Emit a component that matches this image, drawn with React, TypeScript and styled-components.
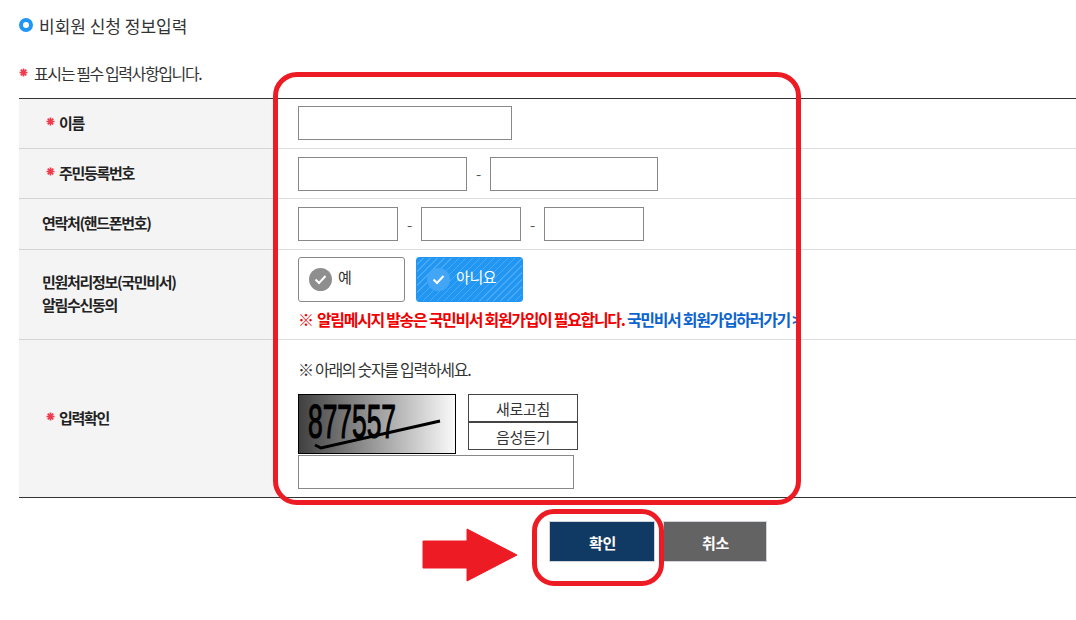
import React from "react";
import styled, { createGlobalStyle } from "styled-components";

const Global = createGlobalStyle`
  html, body { margin: 0; padding: 0; background: #fff; }
  body { font-family: "Noto Sans CJK KR", "Noto Sans", sans-serif; color: #333; width: 1076px; height: 620px; overflow: hidden; }
  * { box-sizing: border-box; }
`;

const Page = styled.div`
  position: relative;
  width: 1076px;
  height: 620px;
  padding: 13px 0 0 19px;
  overflow: hidden;
`;
const Heading = styled.h2`
  display: flex;
  align-items: center;
  gap: 6px;
  height: 24px;
  margin: 0;
  font-size: 17px;
  font-weight: 400;
  letter-spacing: 0;
  color: #333;
`;
const Bullet = styled.span`
  width: 14px;
  height: 14px;
  border-radius: 50%;
  border: 4px solid #2196f3;
  background: #fff;
`;
const Note = styled.p`
  display: flex;
  align-items: center;
  gap: 6px;
  height: 20px;
  margin: 26px 0 15px;
  font-size: 16px;
  letter-spacing: -1.4px;
  color: #333;
`;
const StarIcon = styled.svg`
  flex: none;
  width: 9px;
  height: 9px;
  transform: translateY(-1px);
`;
const Table = styled.div`
  border-top: 1px solid #333;
  border-bottom: 1px solid #333;
  display: grid;
  grid-template-columns: 259px 1fr;
  width: 1057px;
`;
const Row = styled.div<{ $h: number; $last?: boolean }>`
  display: contents;
  & > * {
    height: ${(p) => p.$h}px;
    border-bottom: ${(p) => (p.$last ? "none" : "1px solid #ddd")};
  }
`;
const Label = styled.div<{ $req?: boolean }>`
  background: #f4f4f4;
  border-bottom-color: #d4d4d4 !important;
  display: flex;
  align-items: center;
  gap: 4px;
  padding: 0 0 3px ${(p) => (p.$req ? 27 : 23)}px;
  font-size: 15px;
  font-weight: 700;
  letter-spacing: -1.3px;
  line-height: 23px;
  color: #222;
`;
const Cell = styled.div<{ $nudge?: number; $top?: number }>`
  display: flex;
  flex-direction: column;
  justify-content: center;
  padding: ${(p) => p.$top ?? 0}px 0 ${(p) => p.$nudge ?? 0}px 20px;
  overflow: hidden;
`;
const Inline = styled.div`
  display: flex;
  align-items: center;
`;
const Field = styled.input<{ $w: number }>`
  width: ${(p) => p.$w}px;
  height: 34px;
  border: 1px solid #888;
  background: #fff;
  padding: 0;
  outline: none;
`;
const Dash = styled.span<{ $w: number }>`
  width: ${(p) => p.$w}px;
  text-align: center;
  font-size: 15px;
  color: #555;
`;
const Choices = styled.div`
  display: flex;
  gap: 11px;
  margin-top: -6px;
`;
const Choice = styled.div<{ $on?: boolean }>`
  width: 107px;
  height: 45px;
  display: flex;
  align-items: center;
  gap: 6px;
  padding: 0 0 5px 10px;
  border-radius: 3px;
  font-size: 15px;
  letter-spacing: -0.4px;
  border: 1px solid ${(p) => (p.$on ? "#2196f3" : "#888")};
  color: ${(p) => (p.$on ? "#fff" : "#333")};
  background: ${(p) =>
    p.$on
      ? "repeating-linear-gradient(135deg, #2196f3 0 4px, #4aa9f5 4px 5px)"
      : "#fff"};
`;
const CheckDot = styled.span<{ $on?: boolean }>`
  width: 23px;
  height: 23px;
  margin-top: 5px;
  border-radius: 50%;
  display: flex;
  align-items: center;
  justify-content: center;
  background: ${(p) => (p.$on ? "#42a5f5" : "#8e8e8e")};
`;
const Alert = styled.div`
  width: 502px;
  height: 20px;
  margin-top: 7px;
  white-space: nowrap;
  overflow: hidden;
  font-size: 16px;
  font-weight: 700;
  line-height: 20px;
  letter-spacing: -1.33px;
  color: #f00000;
`;
const RefMark = styled.span`
  margin-right: 2px;
`;
const Blue = styled.span`
  color: #0b63ce;
`;
const Hint = styled.div`
  font-size: 16px;
  letter-spacing: -1.3px;
  line-height: 20px;
  color: #333;
  margin-bottom: 15px;
`;
const Captcha = styled.div`
  display: flex;
  gap: 12px;
  margin-bottom: 1px;
`;
const CaptchaImage = styled.svg`
  display: block;
  width: 158px;
  height: 60px;
  border: 1px solid #000;
`;
const CaptchaButtons = styled.div`
  display: flex;
  flex-direction: column;
`;
const SmallBtn = styled.button`
  width: 110px;
  height: 28px;
  padding: 0;
  background: #fff;
  border: 1px solid #444;
  font-family: inherit;
  font-size: 15px;
  letter-spacing: -0.3px;
  color: #333;
  line-height: 1;
`;
const Actions = styled.div`
  display: flex;
  gap: 8px;
  margin-top: 23px;
  padding-left: 530px;
`;
const ActionBtn = styled.button<{ $dark?: boolean }>`
  width: ${(p) => (p.$dark ? 106 : 104)}px;
  height: 41px;
  padding: 1px 0 0 1px;
  border: 1px solid #d0d4d8;
  background: ${(p) => (p.$dark ? "#103a63" : "#636363")};
  color: #fff;
  font-family: inherit;
  font-size: 15px;
  font-weight: 700;
  letter-spacing: -0.3px;
`;
const FormBox = styled.div`
  position: absolute;
  left: 273px;
  top: 72px;
  width: 528px;
  height: 433px;
  border: 5px solid #ed1c24;
  border-radius: 24px;
  pointer-events: none;
`;
const ConfirmBox = styled.div`
  position: absolute;
  left: 532px;
  top: 509px;
  width: 132px;
  height: 77px;
  border: 5px solid #ed1c24;
  border-radius: 22px;
  pointer-events: none;
`;
const Arrow = styled.svg`
  position: absolute;
  left: 422px;
  top: 528px;
  width: 96px;
  height: 54px;
`;

const Star = () => (
  <StarIcon viewBox="0 0 9 9">
    <path
      d="M4.5 0.5V8.5M0.5 4.5H8.5M1.7 1.7L7.3 7.3M7.3 1.7L1.7 7.3"
      stroke="#ef3b4c"
      strokeWidth="1.7"
    />
  </StarIcon>
);

const Check = () => (
  <svg width="13" height="11" viewBox="0 0 13 11" fill="none">
    <path d="M1.5 5.5 L5 9 L11.5 2" stroke="#fff" strokeWidth="2" />
  </svg>
);

export default function App() {
  return (
    <Page>
      <Global />
      <Heading>
        <Bullet />
        비회원 신청 정보입력
      </Heading>
      <Note>
        <Star />
        표시는 필수 입력사항입니다.
      </Note>
      <Table>
        <Row $h={50}>
          <Label $req>
            <Star />
            이름
          </Label>
          <Cell $nudge={1}>
            <Inline>
              <Field $w={214} />
            </Inline>
          </Cell>
        </Row>
        <Row $h={50}>
          <Label $req>
            <Star />
            주민등록번호
          </Label>
          <Cell>
            <Inline>
              <Field $w={169} />
              <Dash $w={23}>-</Dash>
              <Field $w={168} />
            </Inline>
          </Cell>
        </Row>
        <Row $h={51}>
          <Label>연락처(핸드폰번호)</Label>
          <Cell>
            <Inline>
              <Field $w={100} />
              <Dash $w={23}>-</Dash>
              <Field $w={100} />
              <Dash $w={23}>-</Dash>
              <Field $w={100} />
            </Inline>
          </Cell>
        </Row>
        <Row $h={90}>
          <Label>
            민원처리정보(국민비서)
            <br />
            알림수신동의
          </Label>
          <Cell $top={2}>
            <Choices>
              <Choice>
                <CheckDot>
                  <Check />
                </CheckDot>
                예
              </Choice>
              <Choice $on>
                <CheckDot $on>
                  <Check />
                </CheckDot>
                아니요
              </Choice>
            </Choices>
            <Alert>
              <RefMark>※</RefMark> 알림메시지 발송은 국민비서 회원가입이 필요합니다. <Blue>국민비서 회원가입하러가기 &gt;</Blue>
            </Alert>
          </Cell>
        </Row>
        <Row $h={157} $last>
          <Label $req>
            <Star />
            입력확인
          </Label>
          <Cell $top={11}>
            <Hint>※ 아래의 숫자를 입력하세요.</Hint>
            <Captcha>
              <CaptchaImage viewBox="0 0 156 58">
                <defs>
                  <linearGradient id="cap" x1="0" x2="1" y1="0" y2="0">
                    <stop offset="0" stopColor="#404040" />
                    <stop offset="1" stopColor="#fafafa" />
                  </linearGradient>
                </defs>
                <rect width="156" height="58" fill="url(#cap)" />
                <text
                  x="9"
                  y="43"
                  fontFamily="Liberation Sans, sans-serif"
                  fontSize="48"
                  fill="#000"
                  stroke="#000"
                  strokeWidth="1.2"
                  textLength="88"
                  lengthAdjust="spacingAndGlyphs"
                >
                  877557
                </text>
                <path d="M16 50 L22 53 L141 26" stroke="#000" strokeWidth="3" fill="none" />
              </CaptchaImage>
              <CaptchaButtons>
                <SmallBtn>새로고침</SmallBtn>
                <SmallBtn>음성듣기</SmallBtn>
              </CaptchaButtons>
            </Captcha>
            <Inline>
              <Field $w={276} />
            </Inline>
          </Cell>
        </Row>
      </Table>
      <Actions>
        <ActionBtn $dark>확인</ActionBtn>
        <ActionBtn>취소</ActionBtn>
      </Actions>
      <FormBox />
      <ConfirmBox />
      <Arrow viewBox="0 0 96 54">
        <path
          d="M1 13 H45 V1 L95 27 L45 53 V40 H1 Z"
          fill="#ed1c24"
          stroke="#ed1c24"
          strokeLinejoin="round"
        />
      </Arrow>
    </Page>
  );
}
